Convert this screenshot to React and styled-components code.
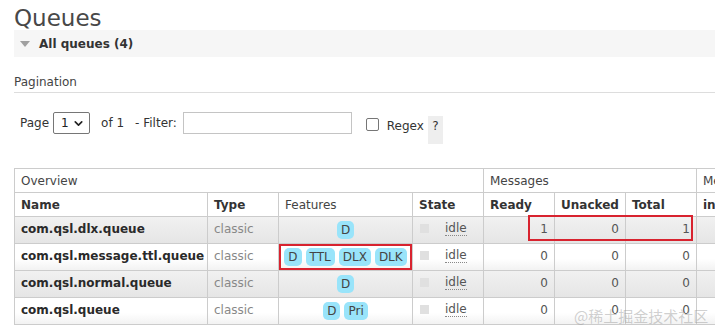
import React from "react";
import styled, { createGlobalStyle } from "styled-components";
import { ChevronDown } from "lucide-react";

const queues = [
  { name: "com.qsl.dlx.queue", features: ["D"], ready: 1, unacked: 0, total: 1 },
  { name: "com.qsl.message.ttl.queue", features: ["D", "TTL", "DLX", "DLK"], ready: 0, unacked: 0, total: 0, marked: true },
  { name: "com.qsl.normal.queue", features: ["D"], ready: 0, unacked: 0, total: 0 },
  { name: "com.qsl.queue", features: ["D", "Pri"], ready: 0, unacked: 0, total: 0 },
];

const App = () => {
  return (
    <>
      <GlobalStyle />
      <Page>
        <Title>Queues</Title>
        <Band>
          <Triangle />
          <BandLabel>All queues (4)</BandLabel>
        </Band>

        <SectionHead>Pagination</SectionHead>
        <PagerRow>
          <Text>Page</Text>
          <SelectBox>
            <span>1</span>
            <ChevronDown size={13} strokeWidth={3} color="#222" />
          </SelectBox>
          <Text gap={11}>of 1</Text>
          <Text gap={11}>- Filter:</Text>
          <FilterInput />
          <Check />
          <Text gap={8} drop={3}>Regex</Text>
          <Help>?</Help>
        </PagerRow>

        <TableWrap>
          <List>
            <colgroup>
              <col style={{ width: 193 }} />
              <col style={{ width: 71 }} />
              <col style={{ width: 134 }} />
              <col style={{ width: 71 }} />
              <col style={{ width: 71 }} />
              <col style={{ width: 71 }} />
              <col style={{ width: 71 }} />
              <col style={{ width: 84 }} />
            </colgroup>
            <thead>
              <GroupRow>
                <Th colSpan={4} plain>Overview</Th>
                <Th colSpan={3} plain>Messages</Th>
                <Th plain>Message rates</Th>
              </GroupRow>
              <HeadRow>
                <Th>Name</Th>
                <Th>Type</Th>
                <Th plain>Features</Th>
                <Th>State</Th>
                <Th>Ready</Th>
                <Th>Unacked</Th>
                <Th>Total</Th>
                <Th>incoming</Th>
              </HeadRow>
            </thead>
            <tbody>
              {queues.map((q, i) => (
                <Row key={q.name} alt={i % 2 === 0}>
                  <NameCell>{q.name}</NameCell>
                  <TypeCell>classic</TypeCell>
                  <FeatCell marked={q.marked}>
                    <Badges>
                      {q.features.map((f) => (
                        <Badge key={f}>{f}</Badge>
                      ))}
                    </Badges>
                  </FeatCell>
                  <StateCell>
                    <StateInner>
                      <StatusDot />
                      <Idle>idle</Idle>
                    </StateInner>
                  </StateCell>
                  <Num>{q.ready}</Num>
                  <Num>{q.unacked}</Num>
                  <Num>{q.total}</Num>
                  <Num />
                </Row>
              ))}
            </tbody>
          </List>
          <Mark />
          <Watermark>@稀土掘金技术社区</Watermark>
        </TableWrap>
      </Page>
    </>
  );
};

// STYLED COMPONENTS

const GlobalStyle = createGlobalStyle`
  html, body {
    margin: 0;
    padding: 0;
    background: #fff;
    overflow: hidden;
  }
  body {
    font-family: "DejaVu Sans", Verdana, sans-serif;
    font-size: 12px;
    color: #444;
  }
`;

const Page = styled.div`
  width: 715px;
  height: 335px;
  overflow: hidden;
  padding-left: 14px;
  box-sizing: border-box;
`;

const Title = styled.h1`
  margin: 0;
  padding-top: 7px;
  font-size: 23px;
  line-height: 23px;
  font-weight: normal;
  color: #484848;
`;

const Band = styled.div`
  height: 27px;
  width: 760px;
  background: #f6f6f6;
  display: flex;
  align-items: center;
  padding-left: 6px;
`;

const Triangle = styled.div`
  width: 0;
  height: 0;
  border-left: 5px solid transparent;
  border-right: 5px solid transparent;
  border-top: 6px solid #a0a0a0;
  margin-top: 1px;
`;

const BandLabel = styled.span`
  margin-left: 9px;
  font-weight: bold;
  font-size: 12px;
  color: #333;
`;

const SectionHead = styled.div`
  margin-top: 17px;
  line-height: 16px;
  padding-bottom: 2px;
  border-bottom: 1px solid #ddd;
  width: 760px;
  color: #444;
`;

const PagerRow = styled.div`
  display: flex;
  align-items: flex-start;
  margin-top: 19px;
  padding-left: 6px;
  color: #333;
`;

const Text = styled.span`
  line-height: 22px;
  margin-left: ${(p) => p.gap || 0}px;
  margin-top: ${(p) => p.drop || 0}px;
  white-space: nowrap;
`;

const SelectBox = styled.div`
  margin-left: 4px;
  width: 37px;
  height: 22px;
  box-sizing: border-box;
  border: 1px solid #767676;
  border-radius: 2px;
  display: flex;
  align-items: center;
  justify-content: space-between;
  padding: 0 4px 0 7px;
  color: #222;
`;

const FilterInput = styled.div`
  margin-left: 6px;
  width: 169px;
  height: 22px;
  box-sizing: border-box;
  border: 1px solid #c4c4c4;
`;

const Check = styled.div`
  margin-left: 14px;
  margin-top: 6px;
  width: 13px;
  height: 13px;
  box-sizing: border-box;
  border: 1px solid #767676;
  border-radius: 2px;
`;

const Help = styled.span`
  margin-left: 4px;
  margin-top: 4px;
  width: 15px;
  height: 28px;
  box-sizing: border-box;
  padding-top: 3px;
  line-height: 14px;
  text-align: center;
  background: #eee;
  color: #333;
`;

const TableWrap = styled.div`
  position: relative;
  margin-top: 24px;
`;

const List = styled.table`
  border-collapse: collapse;
  table-layout: fixed;
  width: 766px;
`;

const GroupRow = styled.tr`
  height: 24px;
  background: #fff;
`;

const HeadRow = styled.tr`
  height: 24px;
  background: #fff;
`;

const Th = styled.th`
  border: 1px solid #ccc;
  padding: 0 6px;
  text-align: left;
  font-weight: ${(p) => (p.plain ? "normal" : "bold")};
  color: ${(p) => (p.plain ? "#444" : "#333")};
  white-space: nowrap;
  overflow: hidden;
`;

const Row = styled.tr`
  height: 27px;
  background: ${(p) =>
    p.alt
      ? "linear-gradient(#f1f1f1, #e5e5e5)"
      : "linear-gradient(#fff 55%, #f1f1f1)"};
  td {
    border: 1px solid #ccc;
    padding: 0 6px;
    white-space: nowrap;
    vertical-align: middle;
  }
`;

const NameCell = styled.td`
  font-weight: bold;
  color: #2a2a2a;
  padding-bottom: 3px !important;
`;

const TypeCell = styled.td`
  color: #888;
  padding-bottom: 3px !important;
`;

const FeatCell = styled.td`
  padding: 0 !important;
  box-shadow: ${(p) => (p.marked ? "inset 0 0 0 2px #d8232f" : "none")};
`;

const Badges = styled.div`
  display: flex;
  justify-content: center;
  gap: 4px;
`;

const Badge = styled.span`
  background: #99e4fa;
  color: #444;
  border-radius: 5px;
  padding: 2px 4px;
  line-height: 14px;
`;

const StateCell = styled.td`
  padding-bottom: 3px !important;
`;

const StateInner = styled.div`
  display: flex;
  align-items: center;
`;

const StatusDot = styled.span`
  width: 9px;
  height: 9px;
  background: #e0e0e0;
  margin-left: 1px;
`;

const Idle = styled.span`
  margin-left: 16px;
  color: #555;
  border-bottom: 1px dotted #888;
  line-height: 14px;
`;

const Num = styled.td`
  text-align: right;
  color: #555;
  padding-bottom: 3px !important;
`;

const Mark = styled.div`
  position: absolute;
  left: 514px;
  top: 47px;
  width: 165px;
  height: 26px;
  box-sizing: border-box;
  border: 2px solid #d8232f;
  pointer-events: none;
`;

const Watermark = styled.div`
  position: absolute;
  left: 560px;
  top: 137px;
  font-family: "Noto Sans CJK SC", sans-serif;
  font-size: 15px;
  color: rgba(150, 150, 150, 0.45);
  white-space: nowrap;
`;

export default App;
